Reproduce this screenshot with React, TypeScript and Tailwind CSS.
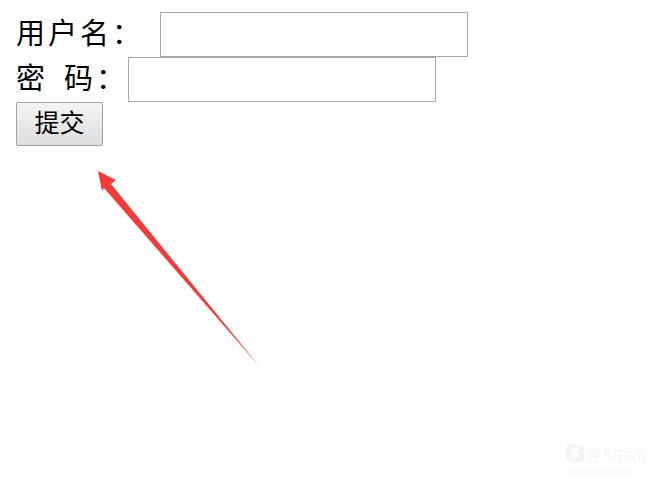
export default function App() {
  const font = { fontFamily: '"Liberation Serif", "Noto Sans CJK SC", serif' };

  return (
    <div className="relative w-[667px] h-[502px] bg-white overflow-hidden text-black" style={font}>
      <form className="flex flex-col pl-4 pt-3" onSubmit={(e) => e.preventDefault()}>
        <div className="flex items-center h-[45px]">
          <label className="text-[29px] leading-none w-[144px] tracking-[3px]">用户名：</label>
          <input
            type="text"
            className="w-[308px] h-[45px] border border-[#a9a9a9] bg-white outline-none"
          />
        </div>
        <div className="flex items-center h-[45px]">
          <label className="text-[29px] leading-none w-[112px] flex">
            <span className="w-[48px]">密</span>
            <span className="w-[32px]">码</span>
            <span>：</span>
          </label>
          <input
            type="text"
            className="w-[308px] h-[45px] border border-[#a9a9a9] bg-white outline-none"
          />
        </div>
        <div className="flex h-[45px]">
          <button
            type="submit"
            className="w-[87px] h-[44px] border border-[#a3a3a3] rounded-[2px] bg-gradient-to-b from-[#f4f4f4] to-[#dedede] text-[25px] leading-none pb-[2px]"
          >
            提交
          </button>
        </div>
      </form>

      {/* red annotation arrow */}
      <svg className="absolute left-0 top-0" width="667" height="502" viewBox="0 0 667 502">
        <polygon
          points="98,171 116,180 111,184 259,366 104,188 102,191"
          fill="#f53a3a"
        />
      </svg>

      {/* faint watermark */}
      <div className="absolute left-[566px] top-[444px] flex flex-col items-start text-[#f5f5f5]">
        <div className="flex items-center gap-[3px]">
          <span className="w-[18px] h-[18px] rounded-[4px] bg-[#f5f5f5] text-white text-[14px] font-bold leading-[18px] text-center" style={{ fontFamily: '"Liberation Sans", sans-serif' }}>
            S
          </span>
          <span className="text-[15px] leading-none" style={{ fontFamily: '"Noto Sans CJK SC", sans-serif' }}>
            搜狗指南
          </span>
        </div>
        <span className="text-[8px] leading-none mt-[6px] text-[#f7f7f7]" style={{ fontFamily: '"Liberation Sans", sans-serif' }}>
          zhinan.sogou.com
        </span>
      </div>
    </div>
  );
}
